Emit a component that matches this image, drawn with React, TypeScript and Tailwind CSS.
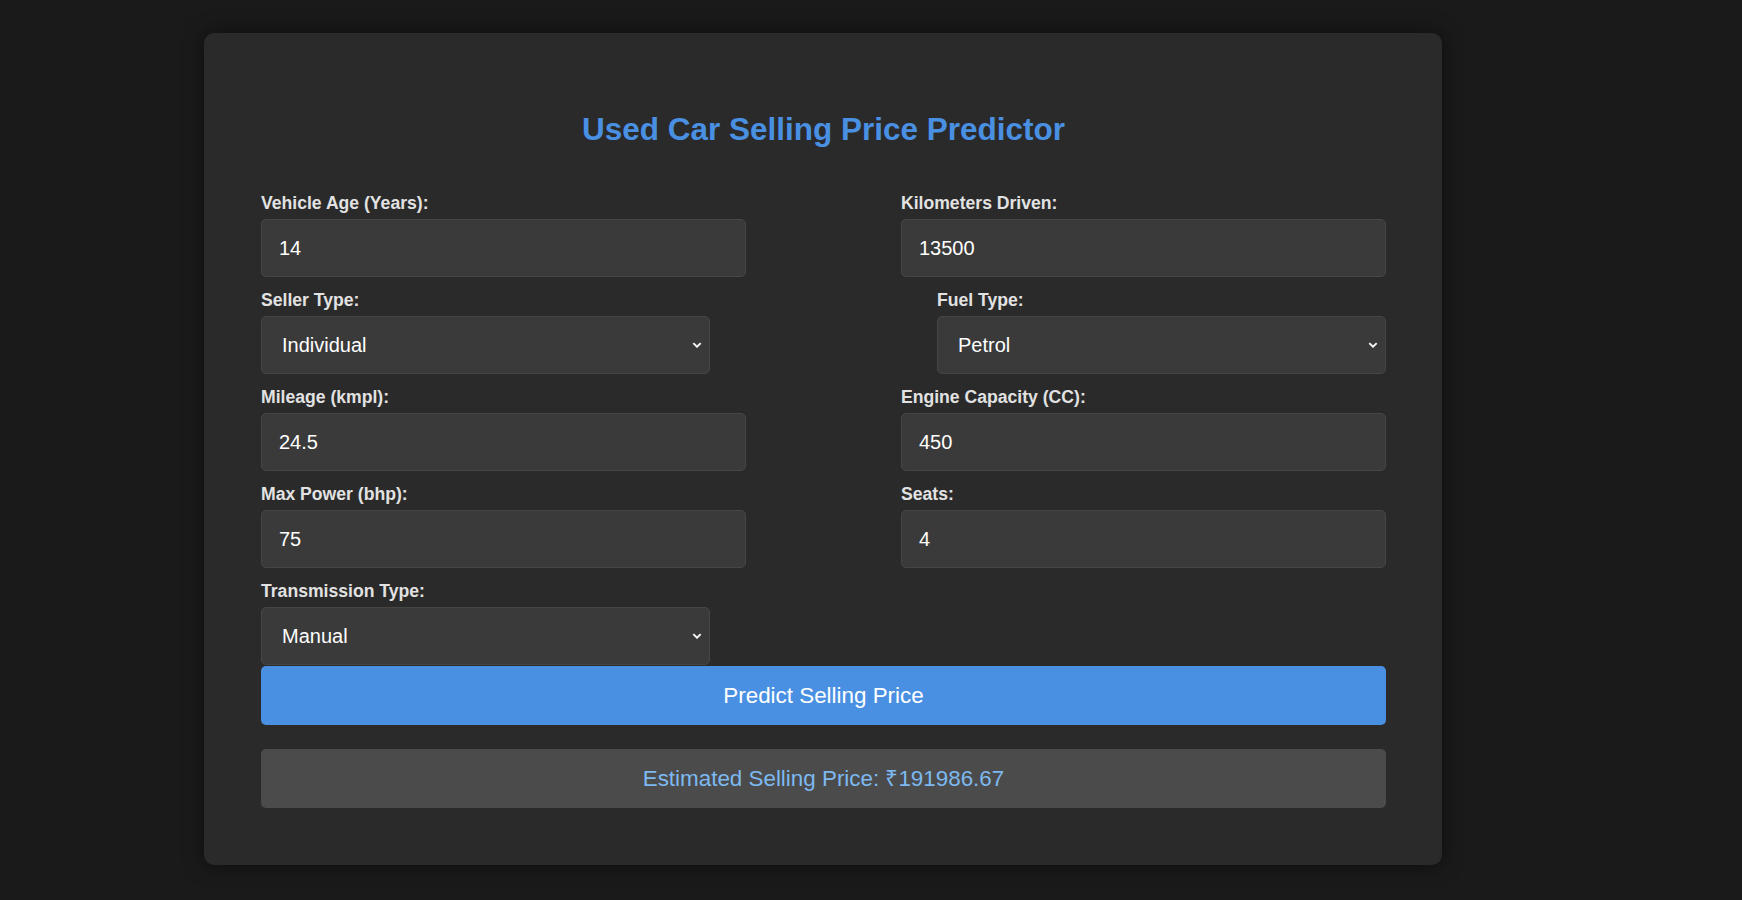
import React from 'react';

type Field = {
    label: string;
    value: string;
    kind: 'input' | 'select';
    align?: 'start' | 'end';
};

const fields: Field[] = [
    { label: 'Vehicle Age (Years):', value: '14', kind: 'input' },
    { label: 'Kilometers Driven:', value: '13500', kind: 'input' },
    { label: 'Seller Type:', value: 'Individual', kind: 'select' },
    { label: 'Fuel Type:', value: 'Petrol', kind: 'select', align: 'end' },
    { label: 'Mileage (kmpl):', value: '24.5', kind: 'input' },
    { label: 'Engine Capacity (CC):', value: '450', kind: 'input' },
    { label: 'Max Power (bhp):', value: '75', kind: 'input' },
    { label: 'Seats:', value: '4', kind: 'input' },
    { label: 'Transmission Type:', value: 'Manual', kind: 'select' },
];

function Chevron() {
    return (
        <svg width="10" height="6" viewBox="0 0 10 6" className="absolute right-[7px] top-1/2 -translate-y-1/2">
            <path d="M1.3 1.1 L5 4.7 L8.7 1.1" fill="none" stroke="#f2f2f2" strokeWidth="2" />
        </svg>
    );
}

function FormField({ field }: { field: Field }) {
    const isSelect = field.kind === 'select';
    return (
        <div className={`flex flex-col ${isSelect ? 'w-[449px]' : 'w-full'} ${field.align === 'end' ? 'justify-self-end' : ''}`}>
            <label className="text-[17.6px] leading-[20px] font-bold text-[#e2e2e2] mb-[6px]">
                {field.label}
            </label>
            <div className="relative h-[58px] rounded-[5px] border border-[#464646] bg-[#3a3a3a] flex items-center">
                <span className={`text-[20px] text-white ${isSelect ? 'pl-[20px]' : 'pl-[17px]'}`}>
                    {field.value}
                </span>
                {isSelect && <Chevron />}
            </div>
        </div>
    );
}

export default function App() {
    return (
        <div
            className="min-h-[900px] bg-[#1a1a1a] pl-[204px] pt-[33px]"
            style={{ fontFamily: '"Liberation Sans", Arial, sans-serif' }}
        >
            <div className="w-[1238px] rounded-[10px] bg-[#2a2a2a] pl-[57px] pr-[56px] pt-[78px] pb-[57px] shadow-[0_0_20px_rgba(0,0,0,0.5)]">
                <h1 className="text-center text-[31.5px] leading-[36px] font-bold text-[#4a90e2] mb-[46px]">
                    Used Car Selling Price Predictor
                </h1>

                {/* Form grid */}
                <div className="grid grid-cols-[485px_485px] justify-between gap-y-[13px]">
                    {fields.map((f) => (
                        <FormField key={f.label} field={f} />
                    ))}
                </div>

                <button className="mt-px h-[59px] w-full rounded-[5px] bg-[#4a90e2] text-[22.4px] text-white">
                    Predict Selling Price
                </button>

                <div className="mt-[24px] h-[59px] rounded-[5px] bg-[#4b4b4b] flex items-center justify-center text-[22.4px] text-[#7db9f0]">
                    Estimated Selling Price: ₹191986.67
                </div>
            </div>
        </div>
    );
}
